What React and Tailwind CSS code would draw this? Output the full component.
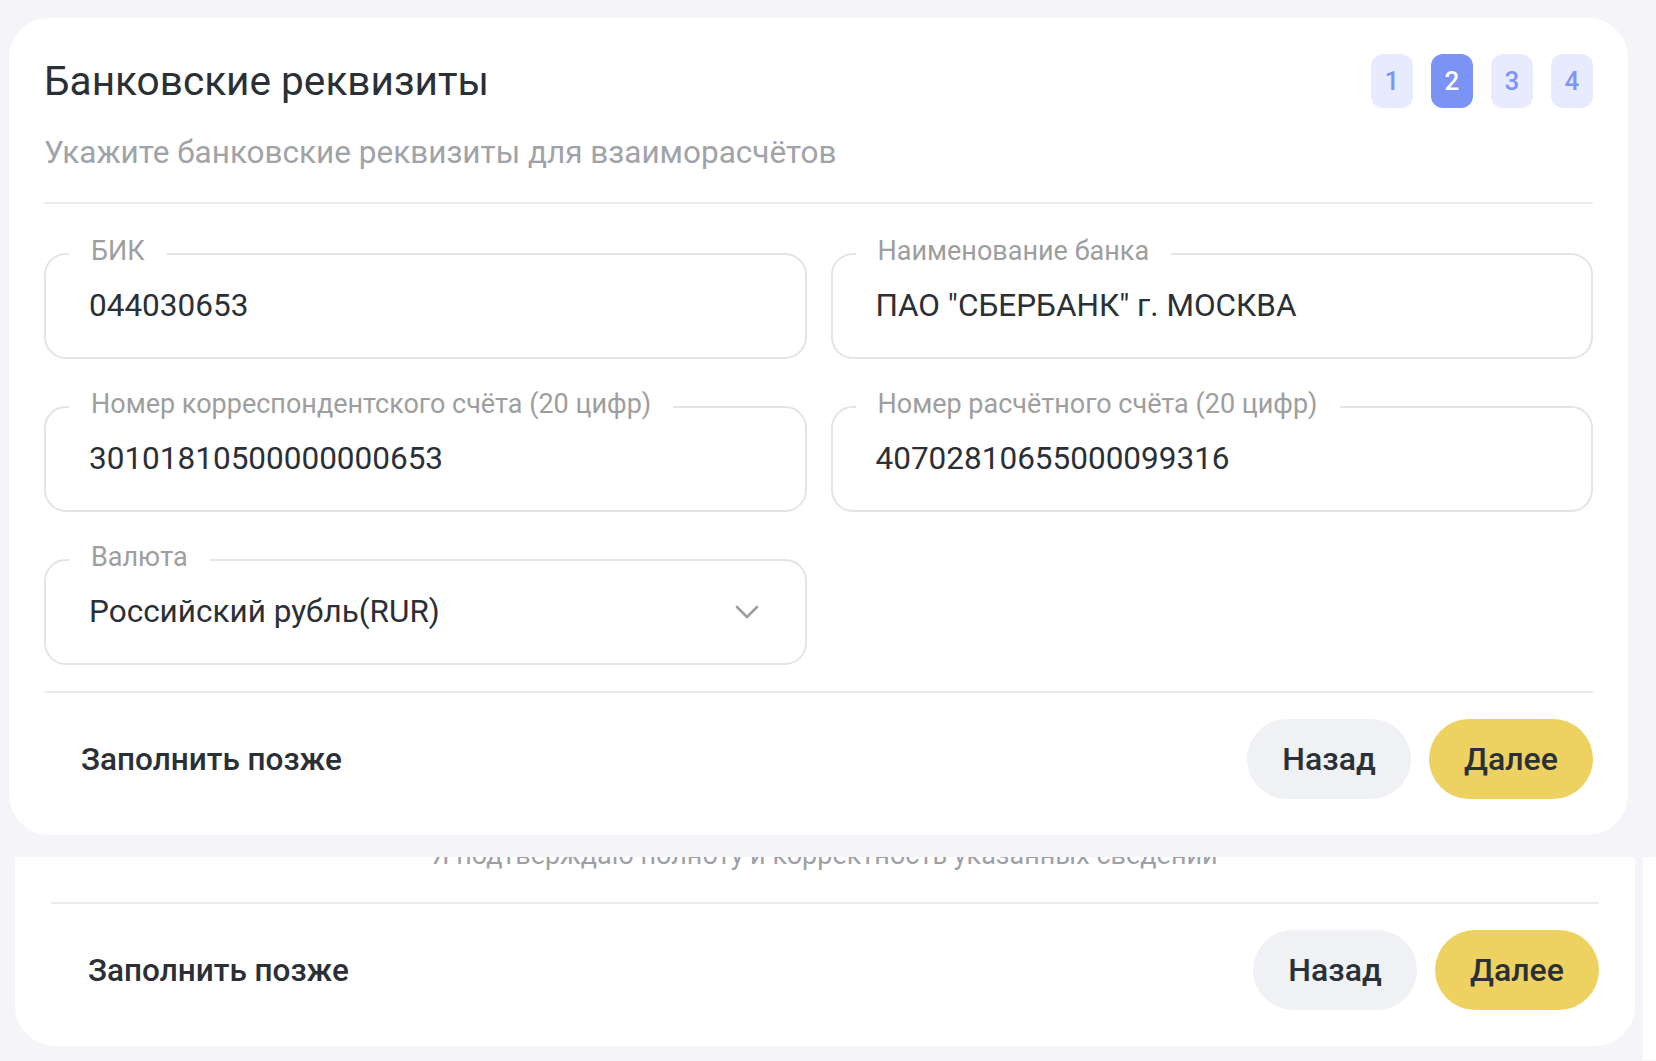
import React from 'react';

const steps = [1, 2, 3, 4];

function Field({ label, value, select }) {
  return (
    <div className="relative h-[106px] rounded-[22px] border-2 border-[#e4e4e4] flex items-center justify-between pl-[43px] pr-[46px]">
      <span className="absolute left-[23px] top-[-4px] -translate-y-1/2 bg-white px-[22px] text-[27px] leading-[30px] text-[#9e9e9e]">
        {label}
      </span>
      <span className="text-[31.5px] leading-[40px] text-[#2b2f36]">{value}</span>
      {select && (
        <svg width="24" height="14" viewBox="0 0 24 14" fill="none">
          <polyline points="2,2 12,12 22,2" stroke="#9e9e9e" strokeWidth="2.6" strokeLinecap="round" strokeLinejoin="round" />
        </svg>
      )}
    </div>
  );
}

function Footer() {
  return (
    <div className="flex h-[80px] items-center justify-between">
      <button className="px-[37px] pt-[2px] text-[31.5px] font-medium text-[#2b2f36]">Заполнить позже</button>
      <div className="flex gap-[18px]">
        <button className="w-[164px] h-[80px] rounded-full bg-[#eff1f5] text-[32px] font-medium text-[#2b2f36]">Назад</button>
        <button className="w-[164px] h-[80px] rounded-full bg-[#edd262] text-[32px] font-medium text-[#2b2f36]">Далее</button>
      </div>
    </div>
  );
}

export default function App() {
  return (
    <div className="w-[1656px] h-[1061px] overflow-hidden bg-[#f5f5f9] font-['Roboto',sans-serif]">
      {/* основная карточка */}
      <div className="pt-[18px] pl-[9px]">
        <div className="w-[1619px] h-[817px] rounded-[40px] bg-white px-[35px] pt-[36px]">
          <div className="flex h-[54px] items-center justify-between">
            <h1 className="text-[40.6px] leading-[54px] text-[#2b2f36]">Банковские реквизиты</h1>
            <div className="flex gap-[18px]">
              {steps.map((s) => (
                <div
                  key={s}
                  className={
                    s === 2
                      ? 'w-[42px] h-[54px] rounded-[12px] bg-[#7b93f4] text-white flex items-center justify-center text-[26px] font-medium'
                      : 'w-[42px] h-[54px] rounded-[12px] bg-[#e8ebfd] text-[#7f94f5] flex items-center justify-center text-[26px] font-medium'
                  }
                >
                  {s}
                </div>
              ))}
            </div>
          </div>
          <p className="mt-[25px] text-[31.5px] leading-[40px] text-[#a0a3a8]">
            Укажите банковские реквизиты для взаиморасчётов
          </p>
          <div className="mt-[29px] h-[2px] bg-[#ebebeb]" />

          <div className="mt-[49px] grid grid-cols-2 gap-x-[24px] gap-y-[47px]">
            <Field label="БИК" value="044030653" />
            <Field label="Наименование банка" value={'ПАО "СБЕРБАНК" г. МОСКВА'} />
            <Field label="Номер корреспондентского счёта (20 цифр)" value="30101810500000000653" />
            <Field label="Номер расчётного счёта (20 цифр)" value="40702810655000099316" />
            <Field label="Валюта" value="Российский рубль(RUR)" select />
          </div>

          <div className="mt-[26px] h-[2px] bg-[#ebebeb]" />
          <div className="mt-[26px]">
            <Footer />
          </div>
        </div>
      </div>

      {/* нижняя панель, частично прокрученная */}
      <div className="mt-[22px] flex h-[203px]">
        <div className="ml-[15px] w-[1620px] h-[189px] overflow-hidden rounded-b-[40px] bg-white px-[36px]">
          <p className="-mt-[17px] text-center text-[27px] leading-[31px] text-[#9ea0a5]">
            Я подтверждаю полноту и корректность указанных сведений
          </p>
          <div className="mt-[31px] h-[2px] bg-[#ebebeb]" />
          <div className="mt-[26px]">
            <Footer />
          </div>
        </div>
        <div className="ml-[8px] w-[13px] bg-white" />
      </div>
    </div>
  );
}
